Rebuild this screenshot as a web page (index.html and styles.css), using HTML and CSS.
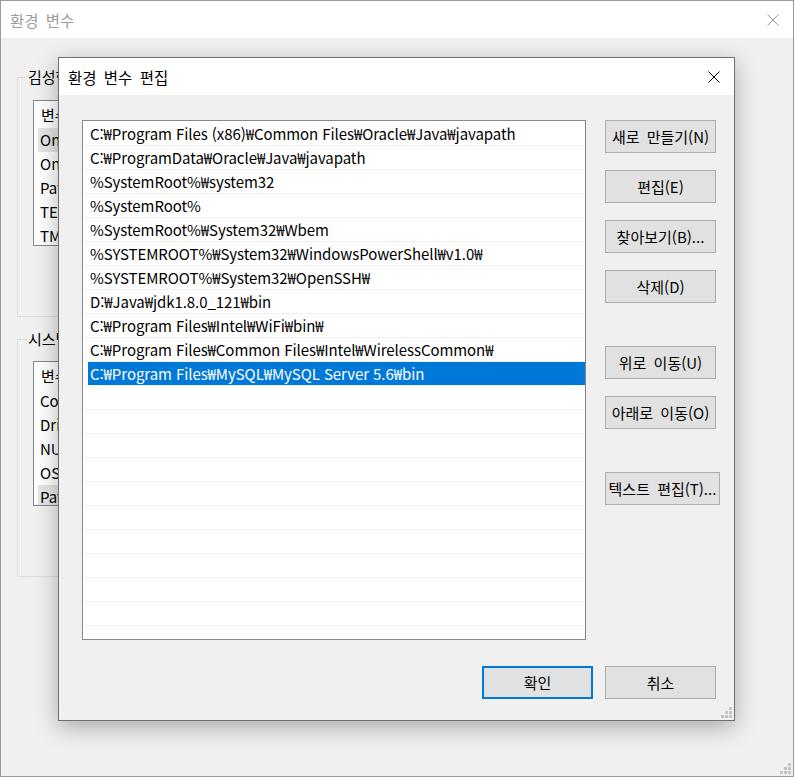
FILE: index.html
```html
<!DOCTYPE html>
<html lang="ko">
<head>
<meta charset="utf-8">
<title>환경 변수 편집</title>
<link rel="stylesheet" href="styles.css">
</head>
<body>
<div class="window">
  <div class="titlebar">
    <span class="title">환경 변수</span>
    <svg class="close close-outer" width="12" height="12" viewBox="0 0 12 12"><path d="M0.5 0.5L11.5 11.5M11.5 0.5L0.5 11.5" stroke="#999" stroke-width="1" fill="none"/></svg>
  </div>
  <div class="content">
    <fieldset class="group">
      <legend>김성현에 대한 사용자 변수(U)</legend>
      <div class="lv">
        <div class="lv-head"><span class="c1">변수</span></div>
        <div class="lv-row sel"><span class="c1">OneDrive</span></div>
        <div class="lv-row"><span class="c1">OneDriveConsumer</span></div>
        <div class="lv-row"><span class="c1">Path</span></div>
        <div class="lv-row"><span class="c1">TEMP</span></div>
        <div class="lv-row"><span class="c1">TMP</span></div>
      </div>
    </fieldset>
    <fieldset class="group group2">
      <legend>시스템 변수(S)</legend>
      <div class="lv lv2">
        <div class="lv-head"><span class="c1">변수</span></div>
        <div class="lv-row"><span class="c1">ComSpec</span></div>
        <div class="lv-row"><span class="c1">DriverData</span></div>
        <div class="lv-row"><span class="c1">NUMBER_OF_PROCESSORS</span></div>
        <div class="lv-row"><span class="c1">OS</span></div>
        <div class="lv-row sel"><span class="c1">Path</span></div>
      </div>
    </fieldset>
  </div>
  <svg class="grip grip-outer" width="11" height="11" viewBox="0 0 11 11" fill="#c4c4c4"><rect x="8" y="0" width="3" height="3"/><rect x="4" y="4" width="3" height="3"/><rect x="8" y="4" width="3" height="3"/><rect x="0" y="8" width="3" height="3"/><rect x="4" y="8" width="3" height="3"/><rect x="8" y="8" width="3" height="3"/></svg>

  <div class="dialog">
    <div class="dlg-title">
      <span class="title-text">환경 변수 편집</span>
      <svg class="close" width="12" height="12" viewBox="0 0 12 12"><path d="M0.5 0.5L11.5 11.5M11.5 0.5L0.5 11.5" stroke="#000" stroke-width="1" fill="none"/></svg>
    </div>
    <div class="dlg-body">
      <div class="dlg-main">
        <div class="listbox">
          <div class="item">C:₩Program Files (x86)₩Common Files₩Oracle₩Java₩javapath</div>
          <div class="item">C:₩ProgramData₩Oracle₩Java₩javapath</div>
          <div class="item">%SystemRoot%₩system32</div>
          <div class="item">%SystemRoot%</div>
          <div class="item">%SystemRoot%₩System32₩Wbem</div>
          <div class="item">%SYSTEMROOT%₩System32₩WindowsPowerShell₩v1.0₩</div>
          <div class="item">%SYSTEMROOT%₩System32₩OpenSSH₩</div>
          <div class="item">D:₩Java₩jdk1.8.0_121₩bin</div>
          <div class="item">C:₩Program Files₩Intel₩WiFi₩bin₩</div>
          <div class="item">C:₩Program Files₩Common Files₩Intel₩WirelessCommon₩</div>
          <div class="item sel">C:₩Program Files₩MySQL₩MySQL Server 5.6₩bin</div>
          <div class="item"></div>
          <div class="item"></div>
          <div class="item"></div>
          <div class="item"></div>
          <div class="item"></div>
          <div class="item"></div>
          <div class="item"></div>
          <div class="item"></div>
          <div class="item"></div>
          <div class="item"></div>
          <div class="item"></div>
        </div>
        <div class="side">
          <button class="btn">새로 만들기(N)</button>
          <button class="btn">편집(E)</button>
          <button class="btn">찾아보기(B)...</button>
          <button class="btn">삭제(D)</button>
          <button class="btn gap">위로 이동(U)</button>
          <button class="btn">아래로 이동(O)</button>
          <button class="btn gap wide">텍스트 편집(T)...</button>
        </div>
      </div>
      <div class="dlg-foot">
        <button class="btn default">확인</button>
        <button class="btn">취소</button>
      </div>
    </div>
    <svg class="grip grip-dlg" width="11" height="11" viewBox="0 0 11 11" fill="#c4c4c4"><rect x="8" y="0" width="3" height="3"/><rect x="4" y="4" width="3" height="3"/><rect x="8" y="4" width="3" height="3"/><rect x="0" y="8" width="3" height="3"/><rect x="4" y="8" width="3" height="3"/><rect x="8" y="8" width="3" height="3"/></svg>
  </div>
</div>
</body>
</html>
```

FILE: styles.css
```css
* { box-sizing: border-box; }
html, body { margin: 0; padding: 0; }
body {
  font-family: "Noto Sans CJK KR", "Noto Sans", sans-serif;
  font-size: 15px;
  color: #000;
  background: #f0f0f0;
}
.window {
  position: relative;
  width: 794px;
  height: 777px;
  border: 1px solid #9a9a9a;
  background: #f0f0f0;
  overflow: hidden;
}
.titlebar {
  height: 37px;
  background: #fff;
  display: flex;
  align-items: center;
  justify-content: space-between;
  padding: 0 14px 0 9px;
}
.titlebar .title {
  color: #9d9d9d;
  line-height: 20px;
  font-size: 15.5px;
  word-spacing: 3px;
}
.content {
  padding: 29px 0 0 16px;
}
.group {
  margin: 0;
  width: 700px;
  border: 1px solid #dcdcdc;
  padding: 0 15px 70px 15px;
}
.group legend {
  line-height: 20px;
  padding: 0 1px;
  margin-left: -6px;
  word-spacing: 3px;
}
.group2 { margin-top: 12px; }
.lv {
  margin-top: 13px;
  height: 146px;
  border: 1px solid #828790;
  background: #fff;
  overflow: hidden;
}
.lv2 { margin-top: 12px; height: 145px; }
.lv-head {
  height: 27px;
  line-height: 27px;
  padding-left: 7px;
  display: flex;
}
.lv-row {
  height: 24px;
  line-height: 24px;
  margin-left: 4px;
  padding-left: 2px;
  display: flex;
  white-space: nowrap;
}
.lv-row.sel { background: #e5e5e5; }
.c1 { width: 220px; flex: none; }

.grip { position: absolute; }
.grip-outer { right: 2px; bottom: 2px; }
.grip-dlg { right: 2px; bottom: 2px; }

.dialog {
  position: absolute;
  left: 57px;
  top: 56px;
  width: 677px;
  height: 664px;
  border: 1px solid #707070;
  background: #f0f0f0;
  box-shadow: 0 6px 22px rgba(0, 0, 0, 0.30);
}
.dlg-title {
  height: 37px;
  background: #fff;
  display: flex;
  align-items: center;
  justify-content: space-between;
  padding: 0 14px 0 9px;
}
.title-text {
  line-height: 20px;
  font-size: 15.5px;
  word-spacing: 3px;
}
.dlg-body {
  padding: 25px 18px 21px 23px;
}
.dlg-main {
  display: flex;
  gap: 19px;
}
.listbox {
  flex: none;
  width: 504px;
  height: 520px;
  border: 1px solid #828790;
  background: #fff;
  padding: 1px 0 0 1px;
  overflow: hidden;
}
.item {
  height: 24px;
  line-height: 23px;
  border-bottom: 1px solid #efefef;
  padding-left: 6px;
  white-space: nowrap;
  letter-spacing: -0.07px;
}
.item.sel {
  color: #fff;
  background: linear-gradient(to right, transparent 4px, #0078d7 4px);
  background-clip: padding-box;
}
.side {
  flex: none;
  width: 111px;
  display: flex;
  flex-direction: column;
  align-items: flex-start;
  gap: 17px;
}
.btn {
  font-family: inherit;
  font-size: 15px;
  color: #000;
  width: 111px;
  height: 33px;
  margin: 0;
  padding: 0;
  background: #e1e1e1;
  border: 1px solid #adadad;
  line-height: 20px;
  white-space: nowrap;
  word-spacing: 3px;
}
.btn.gap { margin-top: 26px; }
.btn.wide { width: 115px; }
.btn.default { border: 2px solid #0078d7; }
.dlg-foot {
  margin-top: 26px;
  display: flex;
  justify-content: flex-end;
  gap: 12px;
}
```
